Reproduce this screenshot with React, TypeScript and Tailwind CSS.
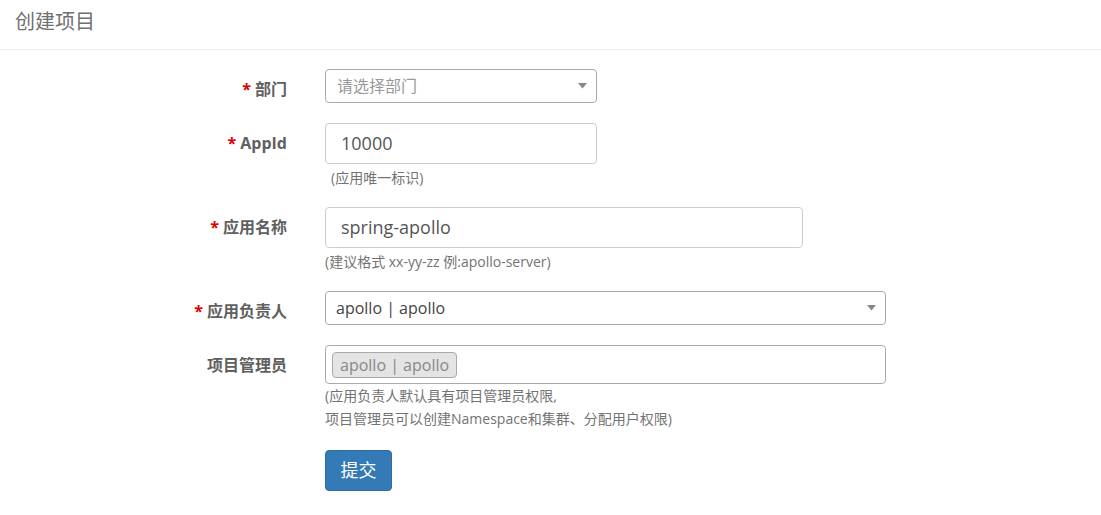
import React from "react";

const font = { fontFamily: '"Open Sans", "Noto Sans CJK SC", sans-serif' };

function Caret() {
  return (
    <svg width="9" height="6" viewBox="0 0 9 6" className="shrink-0">
      <path d="M0 0 L9 0 L4.5 5.5 Z" fill="#888" />
    </svg>
  );
}

function Label({ text, required }: { text: string; required?: boolean }) {
  return (
    <div className="w-[287px] shrink-0 text-right pt-[10px] leading-[20px] text-[16px] font-bold text-[#606060]">
      {required && <span className="text-[#d00] mr-[4px]">*</span>}
      {text}
    </div>
  );
}

export default function App() {
  return (
    <div className="w-[1101px] h-[515px] bg-white overflow-hidden" style={font}>
      <div className="h-[50px] border-b border-[#eeeeee] flex items-center pl-[15px] pb-[6px]">
        <span className="text-[20px] text-[#707070]">创建项目</span>
      </div>
      <div className="flex flex-col gap-[20px] pt-[19px]">
        {/* 部门 */}
        <div className="flex">
          <Label text="部门" required />
          <div className="ml-[38px]">
            <div className="w-[272px] h-[34px] border border-[#aaaaaa] rounded-[4px] flex items-center justify-between pl-[11px] pr-[9px]">
              <span className="text-[16px] text-[#999999]">请选择部门</span>
              <Caret />
            </div>
          </div>
        </div>
        {/* AppId */}
        <div className="flex">
          <Label text="AppId" required />
          <div className="ml-[38px]">
            <div className="w-[272px] h-[41px] border border-[#cccccc] rounded-[4px] flex items-center pl-[15px]">
              <span className="text-[18px] text-[#555555]">10000</span>
            </div>
            <div className="mt-[4px] leading-[19px] text-[14px] text-[#737373] pl-[6px]">(应用唯一标识)</div>
          </div>
        </div>
        {/* 应用名称 */}
        <div className="flex">
          <Label text="应用名称" required />
          <div className="ml-[38px]">
            <div className="w-[478px] h-[41px] border border-[#cccccc] rounded-[4px] flex items-center pl-[15px]">
              <span className="text-[18px] text-[#555555]">spring-apollo</span>
            </div>
            <div className="mt-[4px] leading-[19px] text-[14px] text-[#737373]">(建议格式 xx-yy-zz 例:apollo-server)</div>
          </div>
        </div>
        {/* 应用负责人 */}
        <div className="flex">
          <Label text="应用负责人" required />
          <div className="ml-[38px]">
            <div className="w-[561px] h-[34px] border border-[#aaaaaa] rounded-[4px] flex items-center justify-between pl-[10px] pr-[9px]">
              <span className="text-[16px] text-[#444444]">apollo | apollo</span>
              <Caret />
            </div>
          </div>
        </div>
        {/* 项目管理员 */}
        <div className="flex">
          <Label text="项目管理员" />
          <div className="ml-[38px]">
            <div className="w-[561px] h-[39px] border border-[#aaaaaa] rounded-[4px] flex items-center pl-[6px]">
              <span className="h-[26px] px-[7px] flex items-center bg-[#e4e4e4] border border-[#aaaaaa] rounded-[4px] text-[16px] text-[#888888]">
                apollo | apollo
              </span>
            </div>
            <div className="leading-[23px] text-[14px] text-[#737373]">
              (应用负责人默认具有项目管理员权限,
              <br />
              项目管理员可以创建Namespace和集群、分配用户权限)
            </div>
          </div>
        </div>
        {/* 提交 */}
        <div className="flex">
          <div className="w-[287px] shrink-0" />
          <div className="ml-[38px]">
            <button className="w-[67px] h-[41px] bg-[#337ab7] border border-[#2e6da4] rounded-[4px] text-white text-[18px] flex items-center justify-center">
              提交
            </button>
          </div>
        </div>
      </div>
    </div>
  );
}
